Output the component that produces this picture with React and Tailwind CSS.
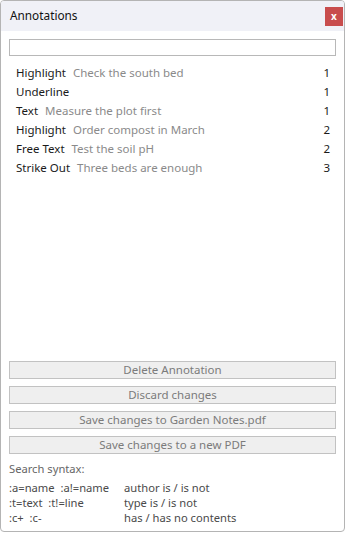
import React from 'react';

const rows = [
  { type: 'Highlight', note: 'Check the south bed', page: 1 },
  { type: 'Underline', note: '', page: 1 },
  { type: 'Text', note: 'Measure the plot first', page: 1 },
  { type: 'Highlight', note: 'Order compost in March', page: 2 },
  { type: 'Free Text', note: 'Test the soil pH', page: 2 },
  { type: 'Strike Out', note: 'Three beds are enough', page: 3 },
];

const buttons = ['Delete Annotation', 'Discard changes', 'Save changes to Garden Notes.pdf', 'Save changes to a new PDF'];

const syntax = [
  [':a=name  :a!=name', 'author is / is not'],
  [':t=text  :t!=line', 'type is / is not'],
  [':c+  :c-', 'has / has no contents'],
];

export default function App() {
  return (
    <div
      className="w-[346px] h-[533px] bg-white flex flex-col text-[11.5px] text-[#1a1a1a]"
      style={{ fontFamily: '"Noto Sans", "Open Sans", sans-serif' }}
    >
      <div className="flex flex-col h-[532px] w-[345px] border border-[#b4b4b4] rounded-[4px] overflow-hidden">
        {/* title bar */}
        <div className="h-[30px] bg-[#f0f1f7] flex items-center justify-between pl-[9px] pr-[1px] shrink-0">
          <span className="text-[11.8px] text-[#111]">Annotations</span>
          <div className="w-[18px] h-[19px] bg-[#c84d4d] text-white text-[10px] font-bold flex items-center justify-center leading-none">x</div>
        </div>

        <div className="flex flex-col flex-1 px-[8px] pt-[8px] pb-[6px]">
          <div className="h-[17px] border border-[#b8b8b8] bg-white" />

          {/* list */}
          <div className="flex flex-col mt-[7px] pl-[7px] pr-[6px] flex-1">
            {rows.map((r, i) => (
              <div key={i} className="flex items-center justify-between h-[19px] leading-none">
                <div className="flex gap-[7px]">
                  <span>{r.type}</span>
                  {r.note && <span className="text-[#8a8a8a]">{r.note}</span>}
                </div>
                <span>{r.page}</span>
              </div>
            ))}
          </div>

          {/* actions */}
          <div className="flex flex-col gap-[7px]">
            {buttons.map((b) => (
              <div
                key={b}
                className="h-[18px] bg-[#efefef] border border-[#c2c2c2] text-[#7b7b7b] flex items-center justify-center leading-none"
              >
                {b}
              </div>
            ))}
          </div>

          {/* help */}
          <div className="mt-[7px] text-[11.2px] text-[#4a4a4a] leading-[15px]">
            <div className="text-[#666] mb-[4px]">Search syntax:</div>
            {syntax.map(([a, b]) => (
              <div key={a} className="flex">
                <span className="w-[115px] whitespace-pre">{a}</span>
                <span>{b}</span>
              </div>
            ))}
          </div>
        </div>
      </div>
    </div>
  );
}
